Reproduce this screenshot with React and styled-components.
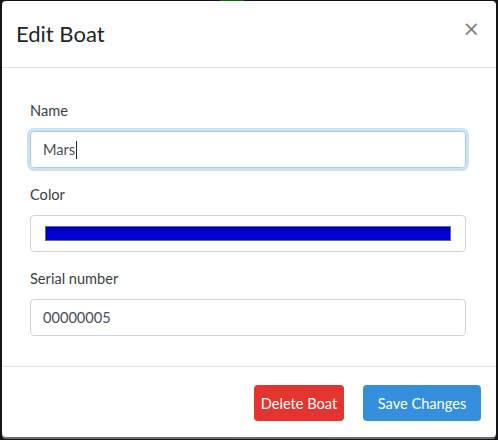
import styled, { createGlobalStyle } from 'styled-components';

const GlobalStyle = createGlobalStyle`
    * {
        box-sizing: border-box;
    }
    body {
        margin: 0;
        background-color: #141414;
        font-family: 'Lato', 'Noto Sans', sans-serif;
        -webkit-font-smoothing: antialiased;
    }
`;

function Field({ label, children }) {
    return (
        <Group>
            <Label>{label}</Label>
            {children}
        </Group>
    );
}

export default function App() {
    return (
        <>
            <GlobalStyle />
            <Backdrop>
                <TopStrip>
                    <GreenMark />
                </TopStrip>
                <Modal>
                    <Header>
                        <Title>Edit Boat</Title>
                        <Close aria-label="Close">&times;</Close>
                    </Header>
                    <Body>
                        <Field label="Name">
                            <Input focused>
                                Mars<Caret />
                            </Input>
                        </Field>
                        <Field label="Color">
                            <Input swatch>
                                <Swatch color="#0000cc" />
                            </Input>
                        </Field>
                        <Field label="Serial number">
                            <Input>00000005</Input>
                        </Field>
                    </Body>
                    <Footer>
                        <Button bg="#e3342f" w={90}>Delete Boat</Button>
                        <Button bg="#3490dc" w={118}>Save Changes</Button>
                    </Footer>
                </Modal>
            </Backdrop>
        </>
    );
}

const Backdrop = styled.div`
    width: 498px;
    height: 440px;
    overflow: hidden;
    display: flex;
    flex-direction: column;
`;

const TopStrip = styled.div`
    height: 1px;
    flex-shrink: 0;
`;

const GreenMark = styled.div`
    margin-left: 220px;
    width: 24px;
    height: 1px;
    background-color: #0b6b0b;
`;

const Modal = styled.div`
    margin-left: 2px;
    width: 494px;
    height: 436px;
    background-color: #ffffff;
    border-radius: 4px;
    display: flex;
    flex-direction: column;
    box-shadow: 0 2px 0 #6e6e6e;
`;

const Header = styled.div`
    height: 67px;
    flex-shrink: 0;
    padding: 0 16px 0 14px;
    border-bottom: 1px solid #dee2e6;
    display: flex;
    align-items: center;
    justify-content: space-between;
`;

const Title = styled.h5`
    margin: 0;
    font-weight: 400;
    font-size: 22px;
    line-height: 30px;
    color: #212529;
`;

const Close = styled.button`
    align-self: flex-start;
    margin-top: 18px;
    padding: 0;
    border: none;
    background: none;
    font-family: 'DejaVu Sans', sans-serif;
    font-size: 21px;
    line-height: 20px;
    color: #000000;
    opacity: 0.5;
`;

const Body = styled.div`
    flex: 1;
    padding: 32px 30px 0 28px;
    border-bottom: 1px solid #dee2e6;
`;

const Group = styled.div`
    margin-bottom: 16px;
`;

const Label = styled.label`
    display: block;
    font-size: 14.6px;
    line-height: 22px;
    margin-bottom: 9px;
    color: #3a3f44;
`;

const Input = styled.div`
    height: 37px;
    padding: ${props => props.swatch ? '0 14px' : '0 14px 0 12px'};
    border: 1px solid ${props => props.focused ? '#a1cbef' : '#ced4da'};
    border-radius: 4px;
    box-shadow: ${props => props.focused ? '0 0 0 3px rgba(52, 144, 220, 0.25)' : 'none'};
    display: flex;
    align-items: center;
    font-size: 14.6px;
    color: #495057;
`;

const Caret = styled.span`
    display: inline-block;
    width: 1px;
    height: 18px;
    margin-left: 1px;
    background-color: #222222;
`;

const Swatch = styled.div`
    flex: 1;
    height: 15px;
    border: 1px solid #6b6b6b;
    background-color: ${props => props.color};
`;

const Footer = styled.div`
    height: 70px;
    flex-shrink: 0;
    padding: 2px 15px 0 0;
    display: flex;
    align-items: center;
    justify-content: flex-end;
    gap: 19px;
`;

const Button = styled.button`
    width: ${props => props.w}px;
    height: 36px;
    padding: 0;
    border: none;
    border-radius: 4px;
    background-color: ${props => props.bg};
    color: #ffffff;
    font-family: inherit;
    font-size: 14.6px;
`;
